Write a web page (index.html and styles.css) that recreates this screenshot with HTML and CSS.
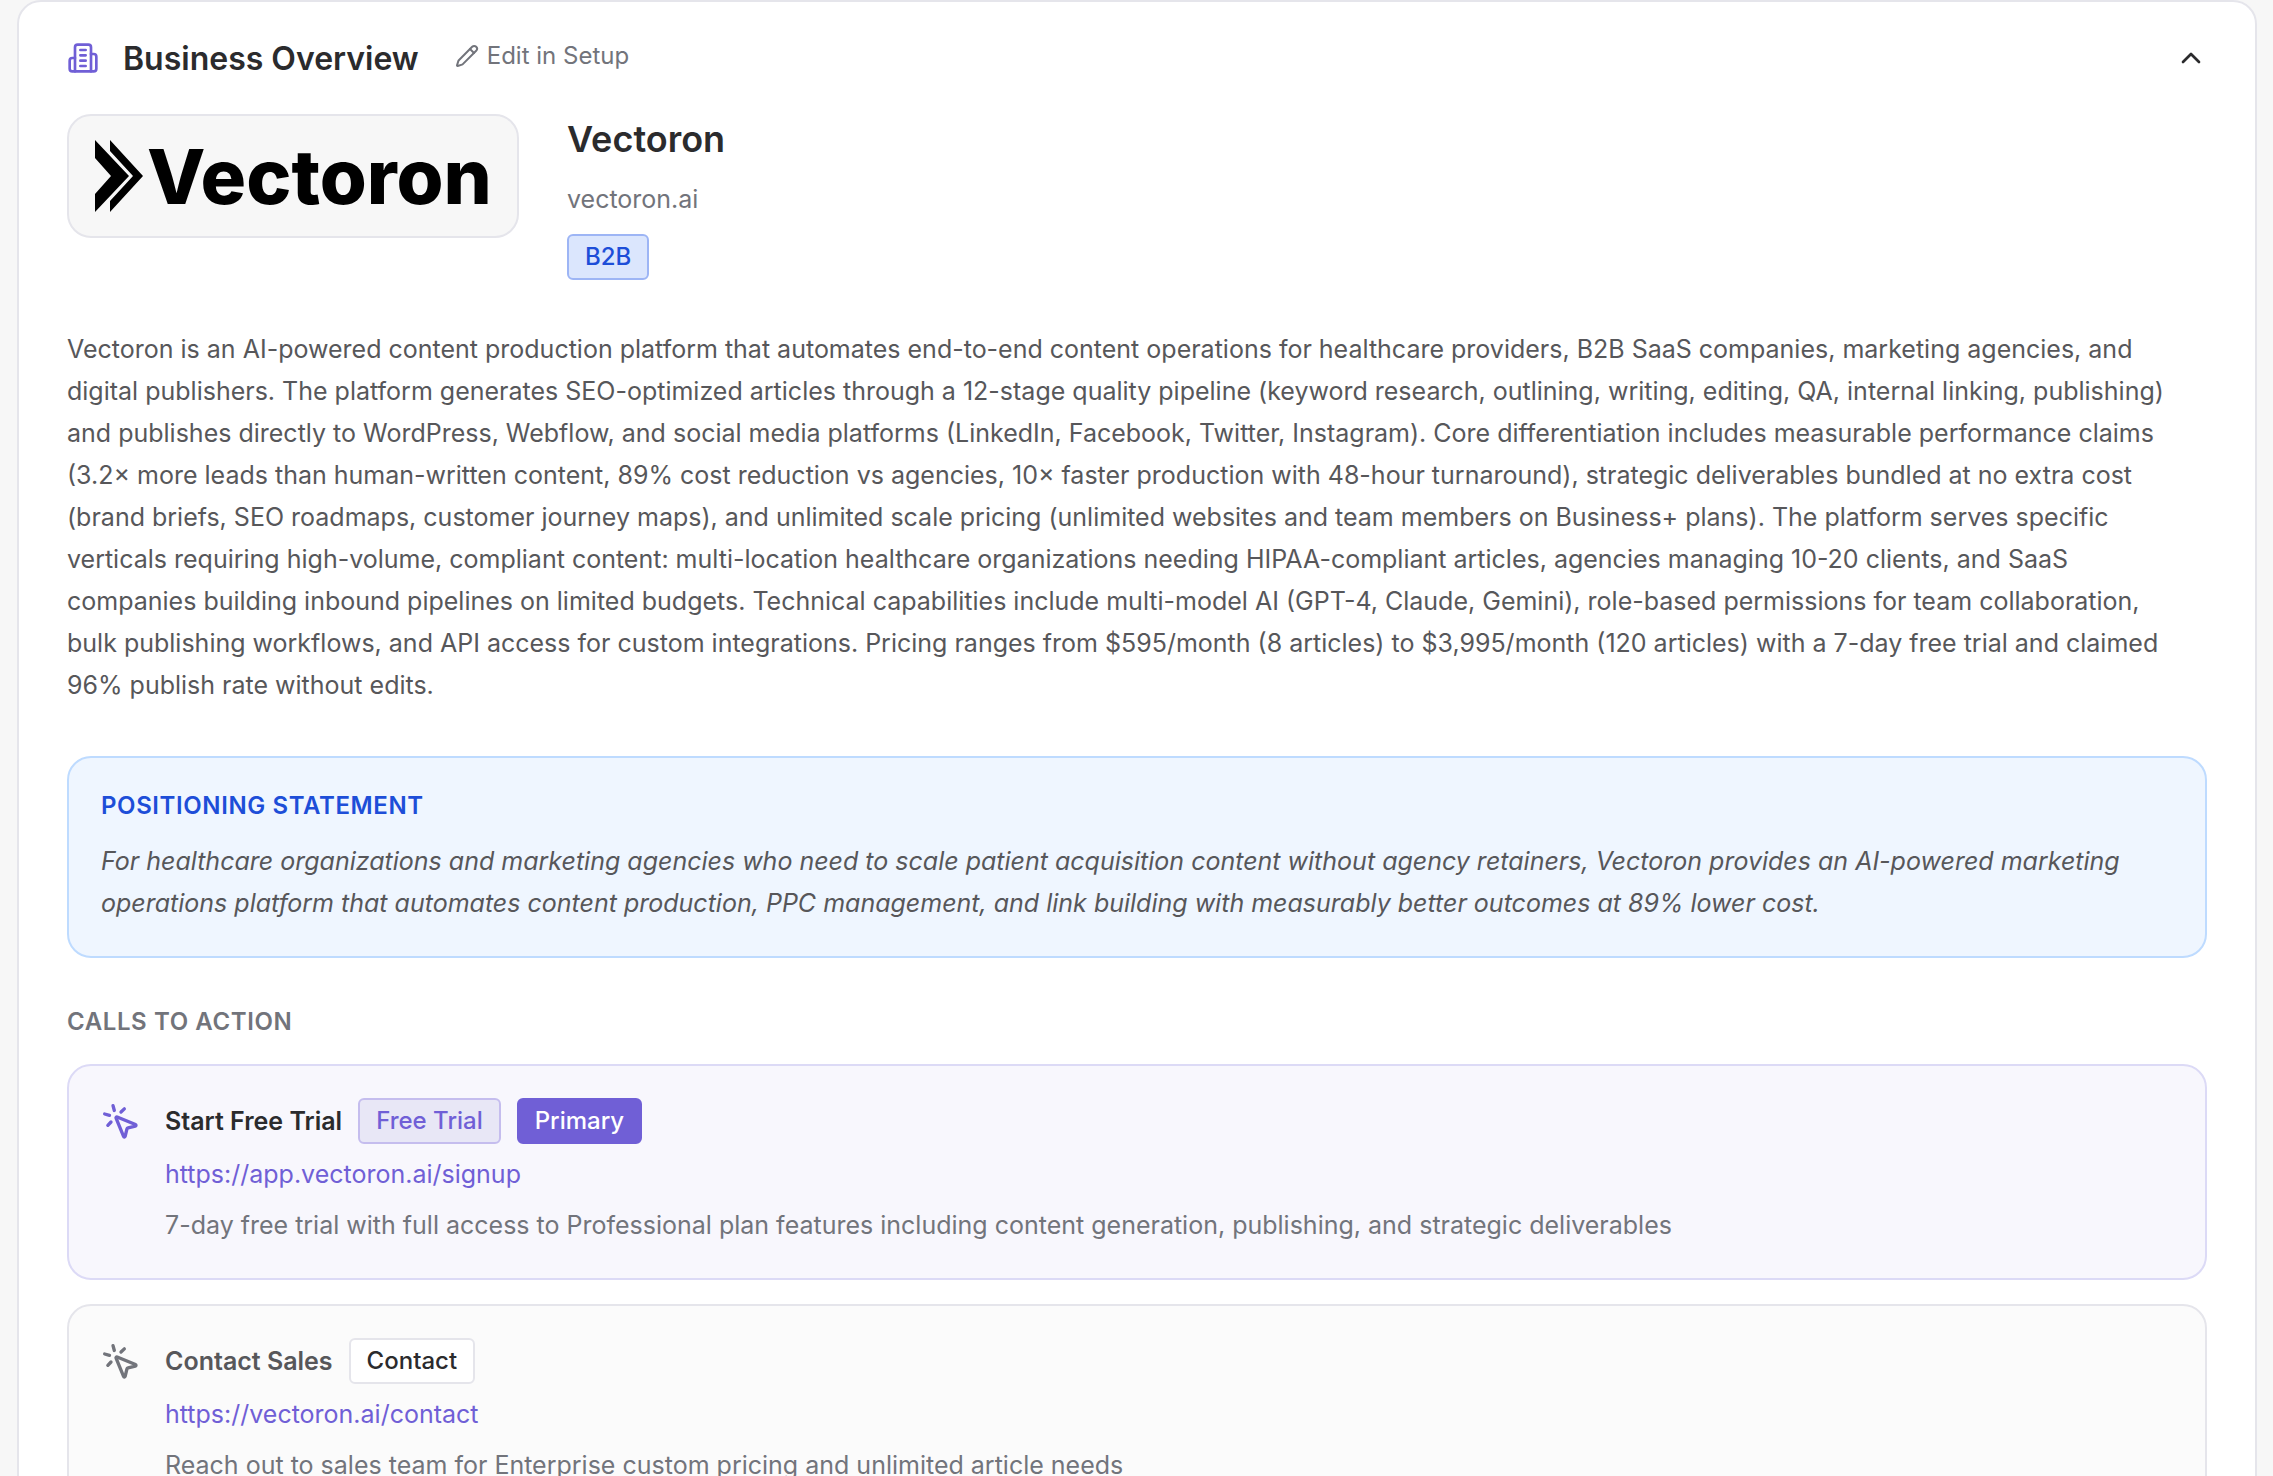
FILE: index.html
```html
<!DOCTYPE html>
<html lang="en">
<head>
<meta charset="utf-8">
<title>Business Overview</title>
<link rel="stylesheet" href="styles.css">
</head>
<body>
<main class="page">
  <section class="panel">
    <header class="panel-header">
      <svg class="icon icon-brand" viewBox="0 0 24 24" aria-hidden="true"><path d="M6 22V4a2 2 0 0 1 2-2h8a2 2 0 0 1 2 2v18Z"/><path d="M6 12H4a2 2 0 0 0-2 2v6a2 2 0 0 0 2 2h2"/><path d="M18 9h2a2 2 0 0 1 2 2v9a2 2 0 0 1-2 2h-2"/><path d="M10 6h4M10 10h4M10 14h4M10 18h4"/></svg>
      <h2 class="panel-title">Business Overview</h2>
      <a class="edit-link" href="#setup"><svg class="icon icon-small" viewBox="0 0 24 24" aria-hidden="true"><path d="M21.174 6.812a1 1 0 0 0-3.986-3.987L3.842 16.174a2 2 0 0 0-.5.83l-1.321 4.352a.5.5 0 0 0 .623.622l4.353-1.32a2 2 0 0 0 .83-.497z"/><path d="m15 5 4 4"/></svg>Edit in Setup</a>
      <button class="collapse" type="button" aria-label="Collapse"><svg class="icon" viewBox="0 0 24 24" aria-hidden="true"><path d="m18 15-6-6-6 6"/></svg></button>
    </header>

    <div class="company">
      <div class="logo">
        <svg class="logo-mark" viewBox="0 0 48 72" aria-hidden="true"><path d="M0 0 34 36 0 72V54L16 36 0 18Z"/><path d="M15 0 48 36 15 72V61L38 36 15 11Z"/></svg>
        <span class="logo-word">Vectoron</span>
      </div>
      <div class="company-info">
        <h3 class="company-name">Vectoron</h3>
        <p class="company-domain">vectoron.ai</p>
        <span class="badge badge-blue">B2B</span>
      </div>
    </div>

    <p class="description">Vectoron is an AI-powered content production platform that automates end-to-end content operations for healthcare providers, B2B SaaS companies, marketing agencies, and digital publishers. The platform generates SEO-optimized articles through a 12-stage quality pipeline (keyword research, outlining, writing, editing, QA, internal linking, publishing) and publishes directly to WordPress, Webflow, and social media platforms (LinkedIn, Facebook, Twitter, Instagram). Core differentiation includes measurable performance claims (3.2× more leads than human-written content, 89% cost reduction vs agencies, 10× faster production with 48-hour turnaround), strategic deliverables bundled at no extra cost (brand briefs, SEO roadmaps, customer journey maps), and unlimited scale pricing (unlimited websites and team members on Business+ plans). The platform serves specific verticals requiring high-volume, compliant content: multi-location healthcare organizations needing HIPAA-compliant articles, agencies managing 10-20 clients, and SaaS companies building inbound pipelines on limited budgets. Technical capabilities include multi-model AI (GPT-4, Claude, Gemini), role-based permissions for team collaboration, bulk publishing workflows, and API access for custom integrations. Pricing ranges from $595/month (8 articles) to $3,995/month (120 articles) with a 7-day free trial and claimed 96% publish rate without edits.</p>

    <section class="positioning">
      <h4 class="eyebrow eyebrow-blue">POSITIONING STATEMENT</h4>
      <p class="statement">For healthcare organizations and marketing agencies who need to scale patient acquisition content without agency retainers, Vectoron provides an AI-powered marketing operations platform that automates content production, PPC management, and link building with measurably better outcomes at 89% lower cost.</p>
    </section>

    <h4 class="eyebrow">CALLS TO ACTION</h4>
    <section class="actions">
      <article class="action action-primary">
        <svg class="icon icon-action" viewBox="0 0 24 24" aria-hidden="true"><path d="M14 4.1 12 6"/><path d="m5.1 8-2.9-.8"/><path d="m6 12-1.9 2"/><path d="M7.2 2.2 8 5.1"/><path d="M9.037 9.69a.498.498 0 0 1 .653-.653l11 4.5a.5.5 0 0 1-.074.949l-4.349 1.041a1 1 0 0 0-.74.739l-1.04 4.35a.5.5 0 0 1-.95.074z"/></svg>
        <div class="action-body">
          <div class="action-head">
            <h5 class="action-title">Start Free Trial</h5>
            <span class="badge badge-soft">Free Trial</span>
            <span class="badge badge-solid">Primary</span>
          </div>
          <a class="action-url" href="https://app.vectoron.ai/signup">https://app.vectoron.ai/signup</a>
          <p class="action-note">7-day free trial with full access to Professional plan features including content generation, publishing, and strategic deliverables</p>
        </div>
      </article>
      <article class="action">
        <svg class="icon icon-action" viewBox="0 0 24 24" aria-hidden="true"><path d="M14 4.1 12 6"/><path d="m5.1 8-2.9-.8"/><path d="m6 12-1.9 2"/><path d="M7.2 2.2 8 5.1"/><path d="M9.037 9.69a.498.498 0 0 1 .653-.653l11 4.5a.5.5 0 0 1-.074.949l-4.349 1.041a1 1 0 0 0-.74.739l-1.04 4.35a.5.5 0 0 1-.95.074z"/></svg>
        <div class="action-body">
          <div class="action-head">
            <h5 class="action-title">Contact Sales</h5>
            <span class="badge">Contact</span>
          </div>
          <a class="action-url" href="https://vectoron.ai/contact">https://vectoron.ai/contact</a>
          <p class="action-note">Reach out to sales team for Enterprise custom pricing and unlimited article needs</p>
        </div>
      </article>
    </section>
  </section>
</main>
</body>
</html>
```
FILE: styles.css
```css
:root {
  --ink: #2b2b2d;
  --body: #57575a;
  --muted: #72747b;
  --line: #e5e5eb;
  --brand: #705fd6;
  --blue: #1d4ed8;
}

* { box-sizing: border-box; }

body, h2, h3, h4, h5, p { margin: 0; }

body {
  background: #f7f7f7;
  color: var(--ink);
  font-family: Inter, "Liberation Sans", sans-serif;
  font-size: 25px;
  line-height: 42px;
}

a { text-decoration: none; }

.page {
  height: 100vh;
  overflow: hidden;
  padding: 0 16px 0 17px;
}

.panel {
  padding: 0 48px 48px;
  border: 2px solid var(--line);
  border-radius: 24px;
  background: #fff;
}

.icon {
  display: block;
  flex: none;
  width: 32px;
  height: 32px;
  fill: none;
  stroke: currentColor;
  stroke-width: 2;
  stroke-linecap: round;
  stroke-linejoin: round;
}

.icon-brand { color: var(--brand); }
.icon-small { width: 24px; height: 24px; }

.panel-header {
  display: flex;
  align-items: center;
  gap: 24px;
  height: 112px;
}

.panel-title {
  padding-top: 2px;
  font-size: 32px;
  font-weight: 600;
}

.edit-link {
  display: flex;
  align-items: center;
  gap: 8px;
  padding: 0 12px 4px;
  color: var(--muted);
  font-size: 24px;
}

.collapse {
  margin-left: auto;
  padding: 0;
  border: 0;
  background: none;
  color: var(--ink);
}

.company {
  display: flex;
  align-items: flex-start;
  gap: 48px;
  margin-bottom: 48px;
}

.logo {
  display: flex;
  align-items: center;
  gap: 4px;
  width: 452px;
  height: 124px;
  padding: 0 26px;
  border: 2px solid var(--line);
  border-radius: 24px;
  background: #f7f7f7;
  color: #000;
}

.logo-mark { flex: none; width: 48px; height: 72px; }

.logo-word {
  font-size: 76px;
  font-weight: 800;
  line-height: 76px;
}

.company-info {
  display: flex;
  flex-direction: column;
  align-items: flex-start;
  gap: 16px;
}

.company-name {
  font-size: 36px;
  font-weight: 600;
  line-height: 50px;
}

.company-domain {
  color: var(--muted);
  line-height: 38px;
}

.badge {
  padding: 0 16px;
  border: 2px solid var(--line);
  border-radius: 6px;
  background: #fff;
  color: var(--ink);
  font-size: 24px;
  font-weight: 500;
  line-height: 42px;
}

.badge-blue {
  border-color: #9db5f5;
  background: #dbe6fd;
  color: var(--blue);
}

.badge-soft {
  border-color: #c5bdee;
  background: #e8e7f6;
  color: var(--brand);
}

.badge-solid {
  border-color: var(--brand);
  background: var(--brand);
  color: #fff;
}

.description {
  margin-bottom: 50px;
  padding-right: 16px;
  color: var(--body);
}

.positioning {
  margin-bottom: 48px;
  padding: 32px;
  border: 2px solid #bedbff;
  border-radius: 24px;
  background: #eff6ff;
}

.eyebrow {
  color: var(--muted);
  font-size: 24px;
  font-weight: 600;
  letter-spacing: 0.025em;
  line-height: 32px;
}

.eyebrow-blue { color: var(--blue); }

.statement {
  margin-top: 18px;
  color: var(--body);
  font-style: italic;
}

.actions {
  display: flex;
  flex-direction: column;
  gap: 24px;
  margin-top: 26px;
}

.action {
  display: flex;
  gap: 24px;
  padding: 32px;
  border: 2px solid var(--line);
  border-radius: 24px;
  background: #fbfbfb;
  color: var(--body);
}

.action-primary {
  border-color: #dcdaf6;
  background: #f8f7fd;
  color: var(--ink);
}

.icon-action {
  width: 40px;
  height: 40px;
  margin-top: 4px;
  color: var(--muted);
}

.action-primary .icon-action { color: var(--brand); }

.action-body {
  display: flex;
  flex-direction: column;
  align-items: flex-start;
  gap: 10px;
}

.action-head {
  display: flex;
  align-items: center;
  gap: 16px;
}

.action-title {
  font-size: 25px;
  font-weight: 600;
}

.action-url {
  color: var(--brand);
  line-height: 40px;
}

.action-note { color: var(--muted); }
```
